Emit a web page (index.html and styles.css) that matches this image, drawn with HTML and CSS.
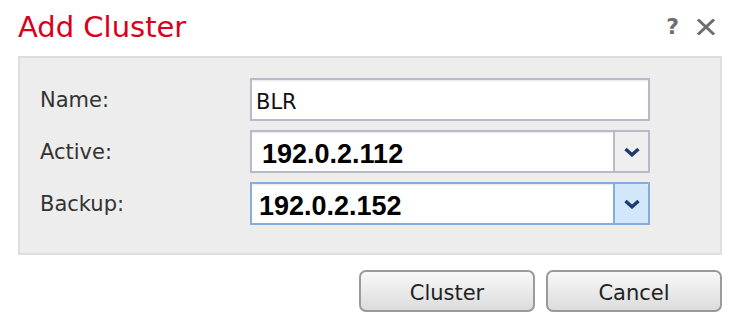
FILE: index.html
```html
<!DOCTYPE html>
<html lang="en">
<head>
  <meta charset="UTF-8">
  <title>Add Cluster</title>
  <link rel="stylesheet" href="styles.css">
</head>
<body>

  <div class="dialog">
    <div class="header">
      <h1 class="title">Add Cluster</h1>
      <div class="tools">
        <span class="help">?</span>
        <svg class="close" width="20" height="16" viewBox="0 0 20 16">
          <path d="M3 1.5 L17 14.5 M17 1.5 L3 14.5" stroke="#6e6e6e" stroke-width="3" stroke-linecap="square"/>
        </svg>
      </div>
    </div>

    <div class="panel">
      <div class="row">
        <label class="label">Name:</label>
        <div class="field text-field">BLR</div>
      </div>
      <div class="row">
        <label class="label">Active:</label>
        <div class="field select">
          <span class="value">192.0.2.112</span>
          <span class="arrow">
            <svg width="16" height="10" viewBox="0 0 16 10"><path d="M1.5 2 L8 7.8 L14.5 2" fill="none" stroke="#1d3a6f" stroke-width="3.4"/></svg>
          </span>
        </div>
      </div>
      <div class="row">
        <label class="label">Backup:</label>
        <div class="field select focused">
          <span class="value">192.0.2.152</span>
          <span class="arrow">
            <svg width="16" height="10" viewBox="0 0 16 10"><path d="M1.5 2 L8 7.8 L14.5 2" fill="none" stroke="#1d3a6f" stroke-width="3.4"/></svg>
          </span>
        </div>
      </div>
    </div>

    <div class="buttons">
      <button class="btn">Cluster</button>
      <button class="btn">Cancel</button>
    </div>
  </div>

</body>
</html>
```

FILE: styles.css
```css
body {
  background-color: #fff;
  color: #333;
  font-family: "DejaVu Sans", Verdana, sans-serif;
  margin: 0;
  padding: 0;
}

.dialog {
  width: 740px;
  height: 328px;
  padding: 0 18px;
  box-sizing: border-box;
}

.header {
  display: flex;
  justify-content: space-between;
  align-items: flex-start;
  height: 56px;
  padding-top: 10px;
  box-sizing: border-box;
}

.title {
  margin: 0;
  font-size: 29px;
  font-weight: normal;
  line-height: 34px;
  color: #d9001b;
}

.tools {
  display: flex;
  align-items: center;
  gap: 17px;
  padding-top: 7px;
  padding-right: 6px;
}

.help {
  font-size: 22px;
  font-weight: bold;
  color: #6e6e6e;
  line-height: 20px;
}

.panel {
  background-color: #ededed;
  border: 2px solid #dedede;
  padding: 20px 20px 28px 20px;
  display: flex;
  flex-direction: column;
  gap: 9px;
}

.row {
  display: flex;
  align-items: center;
  height: 43px;
}

.label {
  width: 210px;
  font-size: 21px;
  color: #333;
}

.field {
  width: 400px;
  height: 43px;
  box-sizing: border-box;
  background-color: #fff;
  border: 2px solid #b9b9cc;
  box-shadow: inset 0 2px 2px -1px #e6e6e6;
}

.text-field {
  font-size: 21px;
  line-height: 23px;
  padding: 11px 4px 0;
  color: #111;
}

.select {
  display: flex;
}

.select .value {
  flex: 1;
  font-family: "Liberation Sans", Arial, sans-serif;
  font-weight: bold;
  font-size: 27px;
  line-height: 30px;
  padding: 7px 0 0 10px;
  color: #000;
}

.select.focused {
  border-color: #86ade0;
}

.select.focused .value {
  padding-left: 7px;
}

.arrow {
  width: 33px;
  display: flex;
  align-items: center;
  justify-content: center;
  border-left: 2px solid #b9b9cc;
  background-color: #efefef;
  border-top-right-radius: 3px;
}

.focused .arrow {
  border-left-color: #86ade0;
  background-color: #d3e7fa;
}

.buttons {
  display: flex;
  justify-content: flex-end;
  gap: 11px;
  margin-top: 15px;
}

.btn {
  width: 176px;
  height: 42px;
  padding: 4px 0 0;
  border: 2px solid #9a9a9a;
  border-radius: 7px;
  background: linear-gradient(#f8f8f8, #dcdcdc);
  font-family: "DejaVu Sans", Verdana, sans-serif;
  font-size: 21px;
  color: #222;
  cursor: pointer;
}
```
